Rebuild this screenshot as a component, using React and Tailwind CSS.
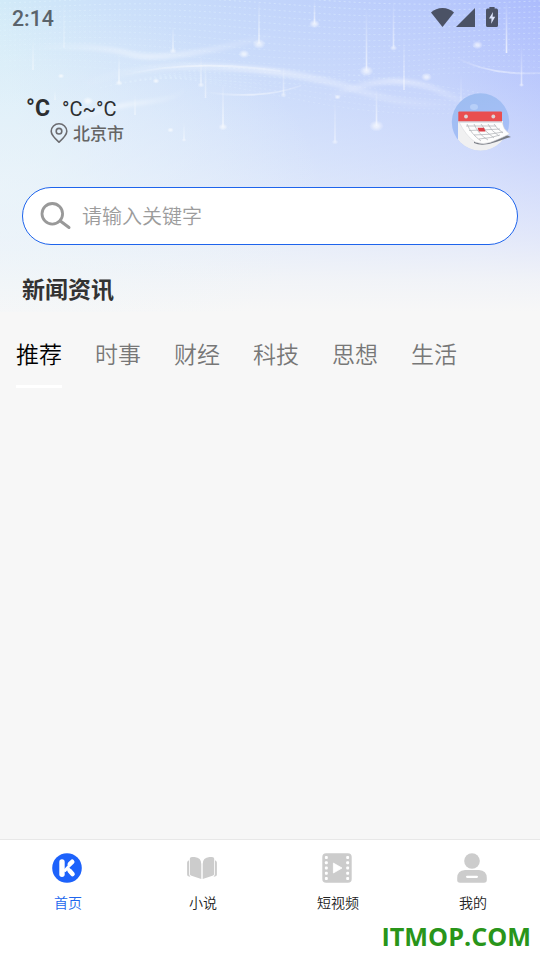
import React from 'react';

const range = (n) => Array.from({ length: n }, (_, i) => i);

// One horizontal dotted wave, sampled every 12px.
const wave = (base, amp, phase, drift) =>
  range(47)
    .map((i) => {
      const x = i * 12 - 6;
      const y = base + Math.sin(x / 72 + phase) * amp + (x / 540) * drift;
      return `${i ? 'L' : 'M'}${x} ${y.toFixed(1)}`;
    })
    .join('');

// x, top, end, glow radius, opacity
const beams = [
  [33, 38, 70, 0, 0.5], [64, 0, 47, 1.5, 0.3], [119, 55, 83, 3.4, 0.65], [173, 25, 51, 3.4, 0.6],
  [201, 55, 85, 3.2, 0.55], [205.5, 62, 98, 0, 0.5], [223, 82, 127, 4.2, 0.7], [259, 0, 44, 6, 0.7],
  [135, 95, 115, 0, 0.5], [184, 122, 140, 2.2, 0.5], [55, 90, 100, 0, 0.4], [283.5, 65, 95, 3, 0.5], [314.5, 0, 24, 5, 0.75],
  [335, 98, 142, 3, 0.5], [366.5, 8, 71, 6.4, 0.75], [376.5, 88, 126, 6.6, 0.75], [393.5, 0, 48, 3.4, 0.6],
  [404, 38, 90, 0, 0.6], [461, 75, 107, 0, 0.4], [506.5, 0, 53, 0, 0.85], [521.5, 45, 85, 2.4, 0.6],
];
const dots = [
  [61, 76, 3], [156, 81, 3.2], [170.5, 130, 3], [244, 54, 5], [337.5, 97, 3],
  [426.5, 77, 5], [477.5, 45, 5], [88, 101, 5],
];

function Backdrop() {
  return (
    <svg className="absolute inset-x-0 top-0 -z-10" width="540" height="312" viewBox="0 0 540 312" aria-hidden="true">
      <defs>
        <linearGradient id="sky" x1="0" x2="1" y1="0.1" y2="0">
          <stop offset="0" stopColor="#d2ebf8" />
          <stop offset="0.2" stopColor="#cce1fa" />
          <stop offset="0.5" stopColor="#c2d5fb" />
          <stop offset="0.8" stopColor="#b9cafc" />
          <stop offset="1" stopColor="#acbcfd" />
        </linearGradient>
        <linearGradient id="fade" x1="0" x2="0" y1="0" y2="1">
          <stop offset="0" stopColor="#f0f4fb" stopOpacity="0" />
          <stop offset="0.25" stopColor="#f0f4fb" stopOpacity="0.2" />
          <stop offset="0.5" stopColor="#eff3fb" stopOpacity="0.46" />
          <stop offset="0.75" stopColor="#f2f4f9" stopOpacity="0.74" />
          <stop offset="0.9" stopColor="#f5f6f7" stopOpacity="0.93" />
          <stop offset="1" stopColor="#f7f7f7" stopOpacity="1" />
        </linearGradient>
        <radialGradient id="side" cx="0" cy="0.6" r="0.6">
          <stop offset="0" stopColor="#edf5fa" stopOpacity="0.65" />
          <stop offset="1" stopColor="#edf5fa" stopOpacity="0" />
        </radialGradient>
        <linearGradient id="beam" x1="0" x2="0" y1="0" y2="1">
          <stop offset="0" stopColor="#fff" stopOpacity="0" />
          <stop offset="1" stopColor="#fff" stopOpacity="0.85" />
        </linearGradient>
        <linearGradient id="ribbon" x1="0" x2="1" y1="0" y2="0">
          <stop offset="0" stopColor="#fff" stopOpacity="0" />
          <stop offset="0.5" stopColor="#fff" stopOpacity="0.38" />
          <stop offset="1" stopColor="#fff" stopOpacity="0.03" />
        </linearGradient>
        <linearGradient id="ribbonEdge" x1="0" x2="1" y1="0" y2="0">
          <stop offset="0" stopColor="#fff" stopOpacity="0" />
          <stop offset="0.5" stopColor="#fff" stopOpacity="0.7" />
          <stop offset="1" stopColor="#fff" stopOpacity="0.25" />
        </linearGradient>
        <radialGradient id="glow">
          <stop offset="0.25" stopColor="#fff" stopOpacity="0.8" />
          <stop offset="1" stopColor="#fff" stopOpacity="0" />
        </radialGradient>
        <filter id="soft" x="-10%" y="-60%" width="120%" height="220%">
          <feGaussianBlur stdDeviation="1.8" />
        </filter>
      </defs>
      <rect width="540" height="312" fill="url(#sky)" />
      <rect width="540" height="312" fill="url(#fade)" />
      <rect width="540" height="312" fill="url(#side)" />
      <g fill="none" stroke="#e6f8ff" strokeWidth="1" strokeDasharray="2 3">
        {range(14).map((i) => (
          <path key={i} d={wave(-6 + i * 6, 4 + i * 0.25, 2.2 + i * 0.14, 8)} opacity={0.42 - i * 0.018} />
        ))}
        {range(7).map((i) => (
          <path key={`l${i}`} d={`M${100 + i * 10} ${88 - i * 2}Q200 ${62 + i * 3} 300 ${70 + i * 5}T480 ${93 + i * 3}`} opacity="0.22" />
        ))}
      </g>
      <g fill="none" stroke="url(#ribbon)" filter="url(#soft)">
        <path d="M30 48Q95 44 130 54T270 36" strokeWidth="6" />
        <path d="M80 86C140 62 210 62 290 74S370 105 450 104" strokeWidth="7" />
        <path d="M325 99Q390 68 440 91T465 106" strokeWidth="6" />
        <path d="M60 128Q95 108 140 103T182 88" strokeWidth="5" />
      </g>
      <g fill="none" stroke="url(#ribbonEdge)" strokeWidth="1.8" strokeLinecap="round" opacity="0.65">
        <path d="M205 92Q260 100 300 86" />
        <path d="M455 57Q490 76 540 73" />
        <path d="M120 76Q190 58 280 71" />
      </g>
      {beams.map(([x, top, end, r, o], i) => (
        <g key={i} opacity={o}>
          <rect x={x - 0.8} y={top} width="1.6" height={end - top} fill="url(#beam)" />
          {r > 0 && <ellipse cx={x} cy={end} rx={r * 1.1} ry={r * 0.85} fill="url(#glow)" />}
        </g>
      ))}
      {dots.map(([x, y, r]) => (
        <ellipse key={x} cx={x} cy={y} rx={r * 1.1} ry={r * 0.85} fill="url(#glow)" opacity="0.75" />
      ))}
    </svg>
  );
}

function StatusBar() {
  return (
    <div className="flex h-[38px] items-start justify-between pl-3 pr-[42px] pt-[7px] font-['Roboto',sans-serif] text-[#5a636b]">
      <span className="text-[21.3px] font-medium leading-6">2:14</span>
      <svg width="67" height="20" viewBox="0 0 67 20" fill="#4b5265">
        <path d="M0 5.6Q4.8 1 11.5 1T23 5.6L11.5 20Z" />
        <path d="M44 1V20H25Z" />
        <path d="M58.4 0H63.6V1.6H65.4Q67 1.6 67 3.2V18.4Q67 20 65.4 20H56.6Q55 20 55 18.4V3.2Q55 1.6 56.6 1.6H58.4Z" />
        <path d="M62 5L58 11.6H60.5L60.2 16.8L64.2 9.8H61.6Z" fill="#dce4fb" />
      </svg>
    </div>
  );
}

function CalendarBadge() {
  return (
    <svg className="mr-[28px] mt-[53px]" width="62" height="62" viewBox="450 91 62 62">
      <defs>
        <linearGradient id="disc" x1="0" x2="0.4" y1="0" y2="1">
          <stop offset="0" stopColor="#9dbdf0" />
          <stop offset="1" stopColor="#a7bff8" />
        </linearGradient>
        <clipPath id="discClip"><circle cx="480.5" cy="122" r="28.7" /></clipPath>
      </defs>
      <circle cx="480.5" cy="122" r="28.7" fill="url(#disc)" />
      <ellipse cx="474" cy="107" rx="4" ry="3" fill="#c7dafb" opacity="0.6" />
      <path d="M458 121H503V153H458Z" fill="#f0f0f1" clipPath="url(#discClip)" />
      <path d="M474 143Q482 147 496 142T511 137L504 134L474 141Z" fill="#777b83" />
      <path d="M459 122H502Q503 129 509.500 134Q497 140 490 142.500T475 142Q466 136 459 122Z" fill="#fdfdfd" stroke="#d8d9dc" strokeWidth="0.6" />
      <g fill="none" stroke="#b2b4b8" strokeWidth="0.75">
        <path d="M466 126H496M469 130.500Q484 130 500 129M474 135Q490 135 503 132M479 139Q492 138 500 135" />
        <path d="M467 124Q471 134 481 141M474 124Q478 134 488 140M481 124Q485 132 494 138M488 124Q491 131 499 136M494 124Q497 129 503 133" />
      </g>
      <path d="M477.500 127.700H484L485.500 131.500H479Z" fill="#dc3d45" />
      <path d="M459.300 111.500H501Q502 111.500 502 112.500V121.500H458.300V112.500Q458.300 111.500 459.300 111.500Z" fill="#e94e50" />
      <path d="M458.300 121.500H502V122.500H458.300Z" fill="#ccd2dc" />
      <circle cx="466" cy="116.500" r="1.9" fill="#ddd4d6" />
      <circle cx="493.300" cy="116.500" r="1.9" fill="#ddd4d6" />
    </svg>
  );
}

function Weather() {
  return (
    <div className="flex h-[149px] items-start justify-between">
      <div className="pl-[26px] pt-[57px]">
        <div className="flex h-7 items-baseline font-['Roboto',sans-serif] text-[#2d2e30]">
          <span className="w-[36px] text-[23px] font-bold leading-7">°C</span>
          <span className="text-[20px] leading-7">°C~°C</span>
        </div>
        <div className="flex h-5 items-center gap-[5px] pl-6 text-[17px] font-medium leading-5 text-[#656565]">
          <svg width="18" height="20" viewBox="0 0 18 20" fill="none" stroke="#6c6c70" strokeWidth="1.6">
            <path d="M9 19.200C6.500 17 1.200 12.400 1.200 8.300a7.800 7.500 0 0 1 15.600 0C16.800 12.400 11.500 17 9 19.200Z" strokeLinejoin="round" />
            <circle cx="9" cy="8.200" r="2.8" />
          </svg>
          <span>北京市</span>
        </div>
      </div>
      <CalendarBadge />
    </div>
  );
}

function SearchBox() {
  return (
    <div className="mx-[22px] flex h-[58px] items-center rounded-full border border-[#1e64ec] bg-white pl-[17px]">
      <svg width="32" height="28" viewBox="0 0 32 28" fill="none" stroke="#999" strokeWidth="2.8">
        <circle cx="12.300" cy="11.800" r="10.300" />
        <path d="M20 18.800L29 25.500" strokeWidth="3" strokeLinecap="round" />
      </svg>
      <span className="ml-[10px] text-[20px] font-[350] leading-7 text-[#9c9c9c]">请输入关键字</span>
    </div>
  );
}

const tabs = ['推荐', '时事', '财经', '科技', '思想', '生活'];

function Tabs() {
  return (
    <div className="mt-[33px] flex gap-[33px] pl-4 text-[23px] font-[350] leading-8">
      {tabs.map((t, i) => (
        <div
          key={t}
          className={
            i === 0
              ? 'h-[51px] w-[46px] border-b-[3px] border-white whitespace-nowrap text-black'
              : 'h-[51px] w-[46px] whitespace-nowrap text-[#777]'
          }
        >
          {t}
        </div>
      ))}
    </div>
  );
}

const HomeIcon = () => (
  <svg width="30" height="30" viewBox="0 0 30 30">
    <circle cx="15" cy="15" r="14.800" fill="#1d62fb" />
    <g fill="none" stroke="#fff" strokeLinecap="round">
      <path d="M10 9V21.300" strokeWidth="5.4" />
      <path d="M20.200 8.800L17.800 11.200M17.600 17.800L20.500 21" strokeWidth="4.6" />
      <path d="M13 17.500L17.800 12.200M16.500 16L18.500 18.600" strokeWidth="3" />
    </g>
    <circle cx="18.700" cy="14.700" r="0.9" fill="#1d62fb" />
  </svg>
);

const BookIcon = () => (
  <svg width="30" height="30" viewBox="0 0 30 30" fill="#ccc">
    <path d="M2.800 5.800Q2.800 4 5 4H7.500Q14.300 4.500 14.300 11V26L4.500 22.700Q2.800 22.300 2.800 20.500Z" />
    <path d="M27.200 5.800Q27.200 4 25 4H22.500Q15.700 4.500 15.700 11V26L25.500 22.700Q27.200 22.300 27.200 20.500Z" />
    <path d="M2 7.300Q0.100 8 0.100 9.500V21.500Q0.100 23.500 3.500 23.700Q2 22.500 2 20.500ZM28 7.300Q29.900 8 29.900 9.500V21.500Q29.900 23.500 26.500 23.700Q28 22.500 28 20.500Z" />
  </svg>
);

const FilmIcon = () => (
  <svg width="30" height="30" viewBox="0 0 30 30">
    <rect x="0.300" y="0.200" width="29.400" height="29.500" rx="3.800" fill="#ccc" />
    {range(5).map((i) => (
      <g key={i} fill="#fff">
        <rect x="2.900" y={3 + i * 5.250} width="2.900" height="2.900" rx="0.9" />
        <rect x="24.200" y={3 + i * 5.250} width="2.900" height="2.900" rx="0.9" />
      </g>
    ))}
    <path d="M11.400 10.100L20 15L11.400 20Z" fill="#fff" stroke="#fff" strokeWidth="0.8" strokeLinejoin="round" />
  </svg>
);

const UserIcon = () => (
  <svg width="30" height="30" viewBox="0 0 30 30" fill="#ccc">
    <circle cx="15" cy="8" r="7.800" />
    <path d="M8 17H22Q29.800 17.500 29.800 25V27Q29.800 29.700 27 29.700H3Q0.200 29.700 0.200 27V25Q0.200 17.500 8 17Z" />
    <rect x="9" y="22.700" width="12" height="2.200" rx="1.100" fill="#fff" />
  </svg>
);

const nav = [
  { label: '首页', Icon: HomeIcon, active: true },
  { label: '小说', Icon: BookIcon },
  { label: '短视频', Icon: FilmIcon },
  { label: '我的', Icon: UserIcon },
];

function BottomNav() {
  return (
    <nav className="mt-auto h-[121px] border-t border-[#e8e8e8] bg-white">
      <div className="grid grid-cols-4 pt-[13px]">
        {nav.map(({ label, Icon, active }) => (
          <div key={label} className="flex flex-col items-center">
            <div className="mr-px">
              <Icon />
            </div>
            <span
              className={
                active
                  ? 'ml-px mt-[9px] text-[14px] font-[350] leading-5 text-[#2166ee]'
                  : 'ml-px mt-[9px] text-[14px] font-[350] leading-5 text-[#222]'
              }
            >
              {label}
            </span>
          </div>
        ))}
      </div>
      <div className="mt-[8px] pr-[9px] text-right font-['Open_Sans',sans-serif] text-[25.2px] font-bold leading-8 text-[#29951a]">
        ITMOP.COM
      </div>
    </nav>
  );
}

export default function App() {
  return (
    <div className="relative isolate flex h-[960px] w-[540px] flex-col overflow-hidden bg-[#f7f7f7] font-['Noto_Sans_CJK_SC',sans-serif]">
      <Backdrop />
      <StatusBar />
      <Weather />
      <SearchBox />
      <h1 className="ml-[22px] mt-[27px] text-[23px] font-bold leading-8 text-[#333]">新闻资讯</h1>
      <Tabs />
      <BottomNav />
    </div>
  );
}
